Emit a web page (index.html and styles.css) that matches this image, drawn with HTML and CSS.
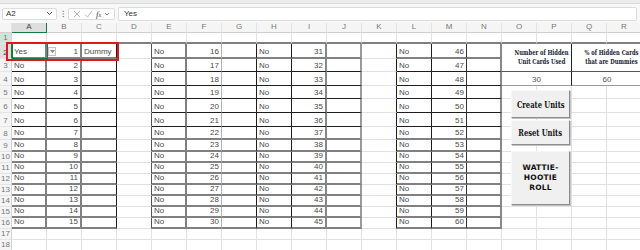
FILE: index.html
```html
<!DOCTYPE html>
<html lang="en">

<head>
    <meta charset="utf-8">
    <title>Hidden Units</title>
    <link rel="stylesheet" href="styles.css">
</head>

<body>
    <div class="ribbon-edge"></div>

    <div class="formula-bar">
        <div class="name-box">
            <span>A2</span>
            <svg width="7" height="5" viewBox="0 0 7 5"><path d="M1 1l2.5 2.5L6 1" fill="none" stroke="#555" stroke-width="1"/></svg>
        </div>
        <span class="kebab">&#8285;</span>
        <div class="fx-box">
            <svg width="8" height="8" viewBox="0 0 8 8"><path d="M1 1l6 6M7 1L1 7" stroke="#b0b0b0" stroke-width="0.9"/></svg>
            <svg width="9" height="8" viewBox="0 0 9 8"><path d="M1 4.5l2.5 2.5L8 1" fill="none" stroke="#b0b0b0" stroke-width="0.9"/></svg>
            <span class="fx">f<small>x</small></span>
            <svg width="6" height="4" viewBox="0 0 6 4"><path d="M1 1l2 2 2-2" fill="none" stroke="#777" stroke-width="0.9"/></svg>
        </div>
        <div class="formula-input">Yes</div>
    </div>

    <div class="sheet-wrap">
        <table class="sheet">
            <colgroup>
                <col class="col-rh">
                <col><col><col><col><col><col><col><col><col>
                <col><col><col><col><col><col><col><col><col>
            </colgroup>
            <tr class="hdr">
                <th class="corner"></th>
                <th class="sel">A</th><th>B</th><th>C</th><th>D</th><th>E</th><th>F</th><th>G</th><th>H</th><th>I</th>
                <th>J</th><th>K</th><th>L</th><th>M</th><th>N</th><th>O</th><th>P</th><th>Q</th><th>R</th>
            </tr>
            <tr class="r1">
                <th class="frz">1</th>
                <td></td><td></td><td></td><td></td><td></td><td></td><td></td><td></td><td></td>
                <td></td><td></td><td></td><td></td><td></td><td></td><td></td><td></td><td></td>
            </tr>
            <tr class="r2 gy">
                <th class="sel">2</th>
                <td class="a">Yes</td><td class="b num">1</td><td class="c">Dummy</td><td class="d"></td>
                <td class="e">No</td><td class="f num">16</td><td class="g"></td>
                <td class="h">No</td><td class="i num">31</td><td class="j"></td><td class="k"></td>
                <td class="l">No</td><td class="m num">46</td><td class="n"></td>
                <td class="stat-head" colspan="2" rowspan="2"><span>Number of Hidden<br>Unit Cards Used</span></td>
                <td class="stat-head last" colspan="2" rowspan="2"><span>% of Hidden Cards<br>that are Dummies</span></td>
            </tr>
            <tr class="r3 dk">
                <th>3</th>
                <td class="a">No</td><td class="b num">2</td><td class="c"></td><td class="d"></td>
                <td class="e">No</td><td class="f num">17</td><td class="g"></td>
                <td class="h">No</td><td class="i num">32</td><td class="j"></td><td class="k"></td>
                <td class="l">No</td><td class="m num">47</td><td class="n"></td>
            </tr>
            <tr class="r4 dk">
                <th>4</th>
                <td class="a">No</td><td class="b num">3</td><td class="c"></td><td class="d"></td>
                <td class="e">No</td><td class="f num">18</td><td class="g"></td>
                <td class="h">No</td><td class="i num">33</td><td class="j"></td><td class="k"></td>
                <td class="l">No</td><td class="m num">48</td><td class="n"></td>
                <td class="stat-val" colspan="2">30</td><td class="stat-val last" colspan="2">60</td>
            </tr>
            <tr class="r5 dk">
                <th>5</th>
                <td class="a">No</td><td class="b num">4</td><td class="c"></td><td class="d"></td>
                <td class="e">No</td><td class="f num">19</td><td class="g"></td>
                <td class="h">No</td><td class="i num">34</td><td class="j"></td><td class="k"></td>
                <td class="l">No</td><td class="m num">49</td><td class="n"></td>
                <td></td><td></td><td></td><td></td>
            </tr>
            <tr class="r6 dk">
                <th>6</th>
                <td class="a">No</td><td class="b num">5</td><td class="c"></td><td class="d"></td>
                <td class="e">No</td><td class="f num">20</td><td class="g"></td>
                <td class="h">No</td><td class="i num">35</td><td class="j"></td><td class="k"></td>
                <td class="l">No</td><td class="m num">50</td><td class="n"></td>
                <td></td><td></td><td></td><td></td>
            </tr>
            <tr class="r7 dk">
                <th>7</th>
                <td class="a">No</td><td class="b num">6</td><td class="c"></td><td class="d"></td>
                <td class="e">No</td><td class="f num">21</td><td class="g"></td>
                <td class="h">No</td><td class="i num">36</td><td class="j"></td><td class="k"></td>
                <td class="l">No</td><td class="m num">51</td><td class="n"></td>
                <td></td><td></td><td></td><td></td>
            </tr>
            <tr class="r8 gy">
                <th>8</th>
                <td class="a">No</td><td class="b num">7</td><td class="c"></td><td class="d"></td>
                <td class="e">No</td><td class="f num">22</td><td class="g"></td>
                <td class="h">No</td><td class="i num">37</td><td class="j"></td><td class="k"></td>
                <td class="l">No</td><td class="m num">52</td><td class="n"></td>
                <td></td><td></td><td></td><td></td>
            </tr>
            <tr class="rs gy">
                <th>9</th>
                <td class="a">No</td><td class="b num">8</td><td class="c"></td><td class="d"></td>
                <td class="e">No</td><td class="f num">23</td><td class="g"></td>
                <td class="h">No</td><td class="i num">38</td><td class="j"></td><td class="k"></td>
                <td class="l">No</td><td class="m num">53</td><td class="n"></td>
                <td></td><td></td><td></td><td></td>
            </tr>
            <tr class="rs gy">
                <th>10</th>
                <td class="a">No</td><td class="b num">9</td><td class="c"></td><td class="d"></td>
                <td class="e">No</td><td class="f num">24</td><td class="g"></td>
                <td class="h">No</td><td class="i num">39</td><td class="j"></td><td class="k"></td>
                <td class="l">No</td><td class="m num">54</td><td class="n"></td>
                <td></td><td></td><td></td><td></td>
            </tr>
            <tr class="rs gy">
                <th>11</th>
                <td class="a">No</td><td class="b num">10</td><td class="c"></td><td class="d"></td>
                <td class="e">No</td><td class="f num">25</td><td class="g"></td>
                <td class="h">No</td><td class="i num">40</td><td class="j"></td><td class="k"></td>
                <td class="l">No</td><td class="m num">55</td><td class="n"></td>
                <td></td><td></td><td></td><td></td>
            </tr>
            <tr class="rs gy">
                <th>12</th>
                <td class="a">No</td><td class="b num">11</td><td class="c"></td><td class="d"></td>
                <td class="e">No</td><td class="f num">26</td><td class="g"></td>
                <td class="h">No</td><td class="i num">41</td><td class="j"></td><td class="k"></td>
                <td class="l">No</td><td class="m num">56</td><td class="n"></td>
                <td></td><td></td><td></td><td></td>
            </tr>
            <tr class="rs gy">
                <th>13</th>
                <td class="a">No</td><td class="b num">12</td><td class="c"></td><td class="d"></td>
                <td class="e">No</td><td class="f num">27</td><td class="g"></td>
                <td class="h">No</td><td class="i num">42</td><td class="j"></td><td class="k"></td>
                <td class="l">No</td><td class="m num">57</td><td class="n"></td>
                <td></td><td></td><td></td><td></td>
            </tr>
            <tr class="rs gy">
                <th>14</th>
                <td class="a">No</td><td class="b num">13</td><td class="c"></td><td class="d"></td>
                <td class="e">No</td><td class="f num">28</td><td class="g"></td>
                <td class="h">No</td><td class="i num">43</td><td class="j"></td><td class="k"></td>
                <td class="l">No</td><td class="m num">58</td><td class="n"></td>
                <td></td><td></td><td></td><td></td>
            </tr>
            <tr class="rs gy">
                <th>15</th>
                <td class="a">No</td><td class="b num">14</td><td class="c"></td><td class="d"></td>
                <td class="e">No</td><td class="f num">29</td><td class="g"></td>
                <td class="h">No</td><td class="i num">44</td><td class="j"></td><td class="k"></td>
                <td class="l">No</td><td class="m num">59</td><td class="n"></td>
                <td></td><td></td><td></td><td></td>
            </tr>
            <tr class="rs gy">
                <th>16</th>
                <td class="a">No</td><td class="b num">15</td><td class="c"></td><td class="d"></td>
                <td class="e">No</td><td class="f num">30</td><td class="g"></td>
                <td class="h">No</td><td class="i num">45</td><td class="j"></td><td class="k"></td>
                <td class="l">No</td><td class="m num">60</td><td class="n"></td>
                <td></td><td></td><td></td><td></td>
            </tr>
            <tr class="rs">
                <th>17</th>
                <td></td><td></td><td></td><td></td><td></td><td></td><td></td><td></td><td></td>
                <td></td><td></td><td></td><td></td><td></td><td></td><td></td><td></td><td></td>
            </tr>
            <tr class="rs">
                <th>18</th>
                <td></td><td></td><td></td><td></td><td></td><td></td><td></td><td></td><td></td>
                <td></td><td></td><td></td><td></td><td></td><td></td><td></td><td></td><td></td>
            </tr>
        </table>

        <div class="active-cell"></div>
        <div class="list-drop">
            <svg width="5" height="3" viewBox="0 0 5 3"><path d="M0 0h5L2.5 3z" fill="#888"/></svg>
        </div>
        <div class="highlight"></div>

        <div class="controls">
            <div class="btn btn-create"><span>Create Units</span></div>
            <div class="btn btn-reset"><span>Reset Units</span></div>
            <div class="btn btn-roll"><span>WATTIE-<br>HOOTIE<br>ROLL</span></div>
        </div>
    </div>
</body>

</html>
```

FILE: styles.css
```css
:root {
    --grid: #e1e1e1;
    --hdr-bg: #f5f5f5;
    --hdr-fg: #777;
    --ink: #4a4a4a;
    --dark-line: #1e1e1e;
    --grey-line: #808080;
    --sel-green: #107c41;
    --mark-red: #e3171c;
}

* {
    margin: 0;
    padding: 0;
    box-sizing: border-box;
}

html,
body {
    width: 640px;
    height: 250px;
    overflow: hidden;
    background: #fff;
    font-family: 'Liberation Sans', Arial, sans-serif;
    color: var(--ink);
}

body {
    display: flex;
    flex-direction: column;
}

.ribbon-edge {
    height: 4px;
    background: #ececec;
    border-bottom: 1px solid #dadada;
}

/* formula bar */

.formula-bar {
    height: 19px;
    display: flex;
    align-items: center;
    padding: 0 3px 0 2px;
    background: #f8f8f8;
    font-size: 8px;
}

.name-box {
    width: 55px;
    height: 12px;
    display: flex;
    align-items: center;
    justify-content: space-between;
    padding: 0 3px 0 3px;
    background: #fff;
    border: 1px solid #dcdcdc;
    border-radius: 2px;
    color: #333;
}

.kebab {
    width: 11px;
    text-align: center;
    color: #666;
    font-size: 9px;
}

.fx-box {
    width: 47px;
    height: 12px;
    display: flex;
    align-items: center;
    justify-content: space-around;
    padding: 0 2px;
    background: #fff;
    border: 1px solid #dcdcdc;
    border-radius: 2px;
}

.fx {
    font-family: 'Liberation Serif', serif;
    font-style: italic;
    font-size: 9px;
    color: #444;
}

.fx small {
    font-size: 6px;
}

.formula-input {
    flex: 1;
    height: 14px;
    margin-left: 3px;
    display: flex;
    align-items: center;
    padding-left: 5px;
    background: #fff;
    border: 1px solid #dcdcdc;
    border-radius: 2px;
    color: #333;
}

/* sheet */

.sheet-wrap {
    position: relative;
    flex: 1;
    overflow: hidden;
}

.sheet {
    width: 642px;
    table-layout: fixed;
    border-collapse: separate;
    border-spacing: 0;
    font-size: 8px;
}

.sheet col {
    width: 35px;
}

.sheet col.col-rh {
    width: 12px;
}

.sheet th,
.sheet td {
    padding: 0 2px 1px;
    line-height: 1;
    white-space: nowrap;
    overflow: hidden;
    vertical-align: bottom;
    font-weight: normal;
}

.sheet td {
    border-right: 1px solid var(--grid);
    border-bottom: 1px solid var(--grid);
}

.sheet th {
    background: var(--hdr-bg);
    color: var(--hdr-fg);
    border-right: 1px solid #d4d4d4;
    border-bottom: 1px solid #e4e4e4;
    text-align: center;
    padding: 0 0 1px;
}

.hdr {
    height: 10px;
}

.hdr th {
    border-right-color: #e2e2e2;
    border-bottom-color: #cfcfcf;
    vertical-align: middle;
}

.hdr th.sel {
    background: #dedede;
    color: #444;
    border-bottom: 1px solid var(--sel-green);
}

th.sel {
    background: #dedede;
    color: #444;
    border-right: 1px solid var(--sel-green);
}

th.frz {
    background: #cfe6d6;
}

.r1 {
    height: 11px;
}

.r1 td {
    border-bottom: 2px solid var(--grey-line);
}

.r2 {
    height: 15px;
}

.r3,
.r5 {
    height: 13px;
}

.r4,
.r6,
.r7 {
    height: 14px;
}

.r8 {
    height: 13px;
}

.rs {
    height: 11px;
}

.r8+.rs {
    height: 12px;
}

.num {
    text-align: right;
}

/* block borders */

.dk :is(.a, .b, .c, .e, .f, .g, .h, .i, .j, .l, .m, .n) {
    border-bottom: 1px solid var(--dark-line);
}

.gy :is(.a, .b, .c, .e, .f, .g, .h, .i, .j, .l, .m, .n) {
    border-bottom: 2px solid var(--grey-line);
}

.sheet .a,
.sheet .b,
.sheet .e {
    border-right: 2px solid var(--grey-line);
}

.sheet .c,
.sheet .g,
.sheet .h,
.sheet .k,
.sheet .l {
    border-right: 1px solid var(--dark-line);
}

.sheet .d {
    border-right: 1px solid #555;
}

.sheet .f {
    border-right: 1px solid #b4b4b4;
}

.sheet .i,
.sheet .n {
    border-right: 2px solid #888;
}

.sheet .j {
    border-right: 2px solid #9a9a9a;
}

.sheet .m {
    border-right: 1px solid #333;
}

/* summary cells */

.sheet .stat-head {
    text-align: center;
    vertical-align: middle;
    border-right: 1px solid #222;
    border-bottom: 1px solid #555;
    font-family: 'DejaVu Serif Condensed', 'DejaVu Serif', serif;
    font-weight: bold;
    font-size: 8px;
    line-height: 9px;
    color: #161a33;
    overflow: visible;
}

.stat-head span {
    display: inline-block;
    transform: scaleX(0.72);
}

.sheet .stat-val {
    text-align: center;
    border-right: 1px solid #222;
    border-bottom: 1px solid #9a9a9a;
    color: #555;
}

.sheet .last {
    border-right: none;
}

/* overlays */

.active-cell {
    position: absolute;
    left: 12px;
    top: 20px;
    width: 36px;
    height: 16px;
    border: 1px solid var(--sel-green);
}

.list-drop {
    position: absolute;
    left: 48px;
    top: 24px;
    width: 8px;
    height: 9px;
    display: flex;
    align-items: center;
    justify-content: center;
    background: #f7f7f7;
    border: 1px solid #c4c4c4;
}

.highlight {
    position: absolute;
    left: 6px;
    top: 19px;
    width: 113px;
    height: 19px;
    border: 2px solid var(--mark-red);
}

.controls {
    position: absolute;
    left: 511px;
    top: 67px;
    width: 59px;
    display: flex;
    flex-direction: column;
    gap: 2px;
}

.btn {
    display: flex;
    align-items: center;
    justify-content: center;
    text-align: center;
    background: #f0f0f0;
    border: 1px solid;
    border-color: #f8f8f8 #8c8c8c #8c8c8c #f8f8f8;
    box-shadow: 1px 1px 0 #c4c4c4;
    color: #111;
    font-weight: bold;
}

.btn-create,
.btn-reset {
    font-family: 'DejaVu Serif Condensed', 'DejaVu Serif', serif;
    font-size: 10px;
}

.btn-create span,
.btn-reset span {
    display: inline-block;
    transform: scaleX(0.75);
    white-space: nowrap;
}

.btn-create {
    height: 28px;
}

.btn-reset {
    height: 25px;
}

.btn-roll {
    height: 54px;
    margin-top: 4px;
    font-family: 'DejaVu Sans', sans-serif;
    font-size: 7.5px;
    line-height: 10px;
    letter-spacing: 0.2px;
}
```
